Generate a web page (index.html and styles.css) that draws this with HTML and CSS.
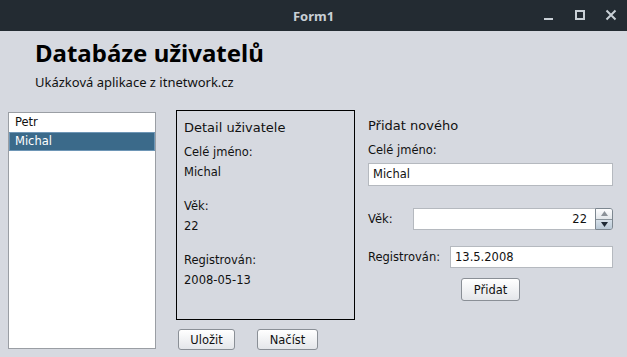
FILE: index.html
```html
<!DOCTYPE html>
<html lang="cs">
<head>
    <meta charset="UTF-8">
    <title>Form1</title>
    <link rel="stylesheet" href="styles.css">
</head>
<body>

    <div class="titlebar">
        <span class="title">Form1</span>
        <div class="controls">
            <svg width="12" height="12" viewBox="0 0 12 12"><rect x="1" y="9" width="9" height="2" fill="#c9d0d6"/></svg>
            <svg width="12" height="12" viewBox="0 0 12 12"><rect x="2" y="2" width="8" height="8" fill="none" stroke="#c9d0d6" stroke-width="2"/></svg>
            <svg width="12" height="12" viewBox="0 0 12 12"><path d="M1.5 1.5 L10.5 10.5 M10.5 1.5 L1.5 10.5" stroke="#c9d0d6" stroke-width="2"/></svg>
        </div>
    </div>

    <div class="header">
        <h1>Databáze uživatelů</h1>
        <p class="subtitle">Ukázková aplikace z itnetwork.cz</p>
    </div>

    <div class="main">
        <div class="list">
            <div class="list-item">Petr</div>
            <div class="list-item selected">Michal</div>
        </div>

        <div class="middle">
            <div class="detail">
                <div class="box-title">Detail uživatele</div>
                <div class="group">
                    <div class="line">Celé jméno:</div>
                    <div class="line">Michal</div>
                </div>
                <div class="group">
                    <div class="line">Věk:</div>
                    <div class="line">22</div>
                </div>
                <div class="group">
                    <div class="line">Registrován:</div>
                    <div class="line">2008-05-13</div>
                </div>
            </div>
            <div class="buttons">
                <button class="btn btn-save">Uložit</button>
                <button class="btn btn-load">Načíst</button>
            </div>
        </div>

        <div class="add">
            <div class="box-title">Přidat nového</div>
            <div class="line">Celé jméno:</div>
            <div class="field field-name">Michal</div>
            <div class="row row-age">
                <span class="row-label">Věk:</span>
                <div class="spinner">
                    <div class="spinner-value">22</div>
                    <div class="spinner-buttons">
                        <div class="spin-up"><svg width="7" height="5" viewBox="0 0 7 5"><path d="M3.5 0 L7 5 L0 5 Z" fill="#8c9299"/></svg></div>
                        <div class="spin-down"><svg width="7" height="5" viewBox="0 0 7 5"><path d="M0 0 L7 0 L3.5 5 Z" fill="#1e2a36"/></svg></div>
                    </div>
                </div>
            </div>
            <div class="row row-date">
                <span class="row-label">Registrován:</span>
                <div class="field field-date">13.5.2008</div>
            </div>
            <div class="add-action">
                <button class="btn btn-add">Přidat</button>
            </div>
        </div>
    </div>

</body>
</html>
```

FILE: styles.css
```css
body {
    margin: 0;
    width: 627px;
    height: 357px;
    overflow: hidden;
    background-color: #d6d9e0;
    font-family: "DejaVu Sans", sans-serif;
    font-size: 11.5px;
    color: #111;
}
.titlebar {
    height: 31px;
    background-color: #232b32;
    display: flex;
    align-items: center;
    justify-content: center;
    position: relative;
}
.title {
    font-family: "Noto Sans", sans-serif;
    font-weight: bold;
    font-size: 13px;
    color: #c9d0d6;
}
.controls {
    position: absolute;
    right: 10px;
    top: 9px;
    display: flex;
    gap: 19px;
}
.controls svg {
    display: block;
}
/* nadpis */
.header {
    padding-left: 35px;
    font-family: "Noto Sans", sans-serif;
}
h1 {
    margin: 0;
    padding-top: 7px;
    font-size: 24px;
    line-height: 30px;
    font-weight: bold;
    color: #000;
}
.subtitle {
    margin: 5px 0 0;
    font-size: 13px;
    line-height: 18px;
}
.main {
    display: flex;
    padding-left: 8px;
    margin-top: 19px;
}
/* seznam uzivatelu */
.list {
    width: 146px;
    height: 235px;
    margin-top: 2px;
    background-color: #fff;
    border: 1px solid #9a9ea4;
}
.list-item {
    height: 19px;
    line-height: 19px;
    padding-left: 6px;
}
.list-item.selected {
    background-color: #3b6a8a;
    color: #fff;
    border: 1px solid #6e96b6;
    height: 17px;
    line-height: 17px;
    padding-left: 5px;
}
.middle {
    margin-left: 20px;
    width: 179px;
}
.detail {
    border: 1px solid #000;
    padding: 7px 0 0 7px;
    box-sizing: border-box;
    height: 210px;
}
.box-title {
    font-size: 13px;
    line-height: 20px;
    margin-bottom: 4px;
}
.line {
    line-height: 20px;
}
.group {
    margin-bottom: 14px;
}
.buttons {
    display: flex;
    gap: 22px;
    margin-top: 9px;
    padding-left: 2px;
}
.btn {
    font-family: "DejaVu Sans", sans-serif;
    font-size: 11.5px;
    color: #111;
    height: 21px;
    padding: 0;
    border: 1px solid #8a8f96;
    border-radius: 3px;
    background: linear-gradient(#ffffff, #e4e6ea);
}
.btn-save {
    width: 57px;
}
.btn-load {
    width: 61px;
}
/* formular pro pridani */
.add {
    margin-left: 13px;
    width: 245px;
    padding-top: 6px;
}
.field {
    height: 23px;
    line-height: 21px;
    box-sizing: border-box;
    background-color: #fff;
    border: 1px solid #b5b9bf;
    padding-left: 4px;
}
.field-name {
    margin-top: 3px;
}
.row {
    display: flex;
    align-items: center;
}
.row-age {
    margin-top: 22px;
}
.row-date {
    margin-top: 16px;
}
.row-label {
    width: 45px;
}
.row-date .row-label {
    width: 82px;
}
.spinner {
    flex: 1;
    display: flex;
    height: 22px;
}
.spinner-value {
    flex: 1;
    background-color: #fff;
    border: 1px solid #b5b9bf;
    border-right: none;
    text-align: right;
    padding-right: 8px;
    line-height: 20px;
}
.spinner-buttons {
    width: 16px;
    display: flex;
    flex-direction: column;
    border: 1px solid #7d8790;
    border-radius: 0 3px 3px 0;
    overflow: hidden;
}
.spinner-buttons div {
    flex: 1;
    display: flex;
    align-items: center;
    justify-content: center;
}
.spin-up {
    background: linear-gradient(#fdfdfe, #e2e6ea);
    border-bottom: 1px solid #8a949c;
}
.spin-down {
    background: linear-gradient(#d7e1ea, #b9c8d6);
}
.field-date {
    flex: 1;
    height: 22px;
}
.add-action {
    display: flex;
    justify-content: center;
    margin-top: 10px;
}
.btn-add {
    width: 59px;
    height: 23px;
}
```
